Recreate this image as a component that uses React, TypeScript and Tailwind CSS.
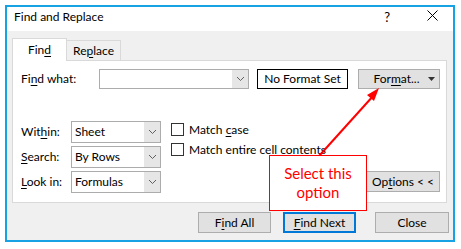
import React from "react";

const U = ({ children }: { children: React.ReactNode }) => (
  <span className="underline underline-offset-2 decoration-1">{children}</span>
);

const Chevron = () => (
  <svg width="9" height="6" viewBox="0 0 9 6">
    <path d="M1 1 L4.5 4.5 L8 1" fill="none" stroke="#606060" strokeWidth="1" />
  </svg>
);

const Select = ({ value }: { value: string }) => (
  <div className="w-[90px] h-[22px] border border-[#acacac] bg-white flex">
    <div className="flex-1 pl-[3px] flex items-center">{value}</div>
    <div className="w-[16px] bg-[#e6e6e6] flex items-center justify-center">
      <Chevron />
    </div>
  </div>
);

const Check = ({ children }: { children: React.ReactNode }) => (
  <div className="h-[17px] flex items-center">
    <div className="w-[13px] h-[13px] border border-[#333333] bg-white" />
    <div className="ml-[5px]">{children}</div>
  </div>
);

const Btn = ({ children, w, blue }: { children: React.ReactNode; w: string; blue?: boolean }) => (
  <div
    className={
      "h-[21px] flex items-center justify-center bg-[#e1e1e1] " +
      w +
      (blue ? " border-2 border-[#0078d7]" : " border border-[#adadad]")
    }
  >
    {children}
  </div>
);

export default function App() {
  return (
    <div
      className="w-[461px] h-[249px] bg-white pl-[5px] pt-[5px] text-[12px] text-black leading-[16px]"
      style={{ fontFamily: 'Lato, "Noto Sans", sans-serif' }}
    >
      <div className="relative w-[450px] h-[237px] border-2 border-[#17a3e3] bg-[#f0f0f0] flex flex-col">
        {/* Title bar */}
        <div className="h-[24px] bg-white flex items-start">
          <div className="pl-[7px] pt-[2px] text-[12px]">Find and Replace</div>
          <div className="ml-auto flex items-start pr-[15px]">
            <span className="pt-[2px] text-[13px]">?</span>
            <svg className="ml-[37px] mt-[3px]" width="11" height="11" viewBox="0 0 11 11">
              <path d="M0.5 0.5 L10.5 10.5 M10.5 0.5 L0.5 10.5" stroke="#000" strokeWidth="1" />
            </svg>
          </div>
        </div>

        {/* Body */}
        <div className="flex-1 pl-[5px] pr-[4px] pt-[7px] flex flex-col">
          {/* Tabs */}
          <div className="flex items-end h-[22px]">
            <div className="relative z-10 w-[55px] h-[23px] -mb-px bg-white border border-b-0 border-[#d9d9d9] flex items-center justify-center pb-[1px]">
              Fin<U>d</U>
            </div>
            <div className="w-[54px] h-[20px] bg-[#f0f0f0] border border-l-0 border-b-0 border-[#d9d9d9] flex items-center justify-center">
              Re<U>p</U>lace
            </div>
          </div>

          {/* Panel */}
          <div className="w-[435px] h-[143px] bg-white border border-[#d9d9d9] pl-[8px] pr-[6px] pt-[8px] flex flex-col">
            <div className="flex items-center h-[20px]">
              <div className="w-[78px]">
                Fi<U>n</U>d what:
              </div>
              <div className="w-[150px] h-[20px] border border-[#acacac] flex justify-end">
                <div className="w-[16px] bg-[#e6e6e6] flex items-center justify-center">
                  <Chevron />
                </div>
              </div>
              <div className="ml-[8px] w-[91px] h-[20px] border border-black flex items-center justify-center">
                No Format Set
              </div>
              <div className="ml-[10px] w-[82px] h-[20px] bg-[#e1e1e1] border border-[#adadad] flex items-center">
                <div className="flex-1 text-center pl-[6px]">
                  For<U>m</U>at...
                </div>
                <svg className="mr-[4px]" width="7" height="4" viewBox="0 0 7 4">
                  <path d="M0 0 L7 0 L3.5 4 Z" fill="#333" />
                </svg>
              </div>
            </div>

            <div className="mt-[32px] flex items-end">
              <div className="flex flex-col gap-[3px]">
                <div className="flex items-center">
                  <div className="w-[50px]">
                    Wit<U>h</U>in:
                  </div>
                  <Select value="Sheet" />
                </div>
                <div className="flex items-center">
                  <div className="w-[50px]">
                    <U>S</U>earch:
                  </div>
                  <Select value="By Rows" />
                </div>
                <div className="flex items-center">
                  <div className="w-[50px]">
                    <U>L</U>ook in:
                  </div>
                  <Select value="Formulas" />
                </div>
              </div>
              <div className="ml-[10px] self-start flex flex-col gap-[3px]">
                <Check>
                  Match <U>c</U>ase
                </Check>
                <Check>
                  Match entire cell co<U>n</U>tents
                </Check>
              </div>
              <div className="ml-auto mb-[1px]">
                <Btn w="w-[74px]">
                  Op<U>t</U>ions &lt; &lt;
                </Btn>
              </div>
            </div>
          </div>

          {/* Bottom buttons */}
          <div className="mt-[9px] flex justify-end">
            <Btn w="w-[73px]">
              F<U>i</U>nd All
            </Btn>
            <div className="ml-[12px]">
              <Btn w="w-[73px]" blue>
                <U>F</U>ind Next
              </Btn>
            </div>
            <div className="ml-[19px]">
              <Btn w="w-[74px]">Close</Btn>
            </div>
          </div>
        </div>

        {/* Arrow overlay */}
        <svg
          className="absolute left-0 top-0 pointer-events-none z-20"
          width="446"
          height="233"
          viewBox="0 0 446 233"
        >
          <line x1="312" y1="149" x2="367" y2="88" stroke="#ff0000" strokeWidth="2" />
          <path d="M372 81 L360 88 L367 94 Z" fill="#ff0000" />
        </svg>

        {/* Callout */}
        <div className="absolute left-[262px] top-[148px] w-[98px] h-[56px] z-30 bg-white border border-[#ff0000] flex flex-col items-center justify-center text-[#ff0000] text-[15px] leading-[19px]">
          <div>Select this</div>
          <div>option</div>
        </div>
      </div>
    </div>
  );
}
